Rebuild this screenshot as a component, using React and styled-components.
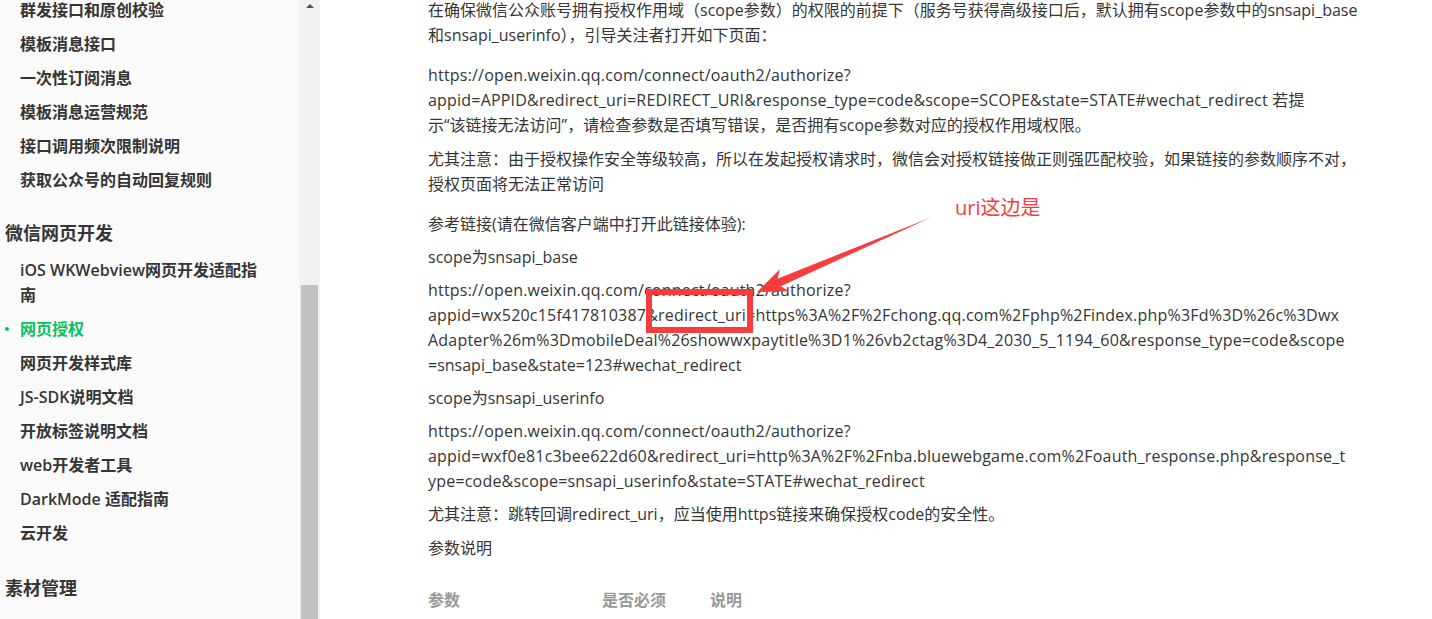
import React from "react";
import styled, { createGlobalStyle } from "styled-components";

const GlobalStyle = createGlobalStyle`
  html, body {
    margin: 0;
    padding: 0;
    background: #fff;
    overflow: hidden;
  }
  body {
    font-family: "Open Sans", "Noto Sans CJK SC", sans-serif;
    color: #353535;
  }
`;

const Page = styled.div`
  position: relative;
  display: flex;
  height: 619px;
  overflow: hidden;
`;

const Sidebar = styled.nav`
  width: 299px;
  flex-shrink: 0;
  background: #fafafa;
  overflow: hidden;
`;

const NavList = styled.ul`
  list-style: none;
  margin: -7px 0 0;
  padding: 0;
`;

const NavItem = styled.li`
  position: relative;
  padding: 4.5px 20px 4.5px 20px;
  font-size: 16px;
  line-height: 25px;
  font-weight: 600;
  color: ${(p) => (p.active ? "#07c160" : "#353535")};

  &::before {
    content: "";
    display: ${(p) => (p.active ? "block" : "none")};
    position: absolute;
    left: 5px;
    top: 15px;
    width: 4px;
    height: 4px;
    border-radius: 50%;
    background: #07c160;
  }
`;

const NavHeading = styled.li`
  margin-top: ${(p) => p.gap || 16}px;
  padding-left: 5px;
  font-size: 18px;
  line-height: 40px;
  font-weight: 600;
  color: #353535;
`;

const ScrollTrack = styled.div`
  width: 21px;
  flex-shrink: 0;
  background: #f1f1f1;
  display: flex;
  flex-direction: column;
  align-items: center;
  justify-content: space-between;
`;

const UpArrow = styled.span`
  margin-top: 4px;
  margin-left: 1px;
  width: 0;
  height: 0;
  border-left: 4px solid transparent;
  border-right: 4px solid transparent;
  border-bottom: 4px solid #505050;
`;

const Thumb = styled.div`
  width: 17px;
  height: 334px;
  background: #c1c1c1;
`;

const Main = styled.main`
  flex: 1;
  padding-left: 108px;
  margin-top: -2.5px;
`;

const Para = styled.p`
  margin: 0 0 ${(p) => (p.gap === undefined ? 8 : p.gap)}px;
  font-size: 16px;
  line-height: 25px;
  white-space: nowrap;
`;

// url-heavy lines are a touch wider in the original font
const Line = styled.span`
  letter-spacing: ${(p) => (p.latin ? "0.2px" : "0")};
`;

const ParamTable = styled.div`
  display: grid;
  grid-template-columns: 174px 108px 1fr;
  margin-top: 27px;
  font-size: 16px;
  line-height: 25px;
  font-weight: 700;
  color: #999;
`;

const MarkBox = styled.div`
  position: absolute;
  left: 646px;
  top: 289px;
  width: 95px;
  height: 32px;
  border: 6px solid #f63c3c;
`;

const MarkNote = styled.span`
  position: absolute;
  left: 955px;
  top: 195px;
  font-size: 20px;
  line-height: 26px;
  color: #f63c3c;
`;

const ArrowLayer = styled.svg`
  position: absolute;
  left: 0;
  top: 0;
  pointer-events: none;
`;

const sections = [
  {
    items: [
      "群发接口和原创校验",
      "模板消息接口",
      "一次性订阅消息",
      "模板消息运营规范",
      "接口调用频次限制说明",
      "获取公众号的自动回复规则",
    ],
  },
  {
    title: "微信网页开发",
    gap: 16,
    items: [
      "iOS WKWebview网页开发适配指南",
      "网页授权",
      "网页开发样式库",
      "JS-SDK说明文档",
      "开放标签说明文档",
      "web开发者工具",
      "DarkMode 适配指南",
      "云开发",
    ],
  },
  { title: "素材管理", gap: 18, items: [] },
];

const paragraphs = [
  {
    gap: 15,
    lines: [
      "在确保微信公众账号拥有授权作用域（scope参数）的权限的前提下（服务号获得高级接口后，默认拥有scope参数中的snsapi_base",
      "和snsapi_userinfo），引导关注者打开如下页面：",
    ],
  },
  {
    gap: 9,
    lines: [
      "https://open.weixin.qq.com/connect/oauth2/authorize?",
      "appid=APPID&redirect_uri=REDIRECT_URI&response_type=code&scope=SCOPE&state=STATE#wechat_redirect 若提",
      "示“该链接无法访问”，请检查参数是否填写错误，是否拥有scope参数对应的授权作用域权限。",
    ],
  },
  {
    gap: 15,
    lines: [
      "尤其注意：由于授权操作安全等级较高，所以在发起授权请求时，微信会对授权链接做正则强匹配校验，如果链接的参数顺序不对，",
      "授权页面将无法正常访问",
    ],
  },
  { lines: ["参考链接(请在微信客户端中打开此链接体验):"] },
  { lines: ["scope为snsapi_base"] },
  {
    lines: [
      "https://open.weixin.qq.com/connect/oauth2/authorize?",
      "appid=wx520c15f417810387&redirect_uri=https%3A%2F%2Fchong.qq.com%2Fphp%2Findex.php%3Fd%3D%26c%3Dwx",
      "Adapter%26m%3DmobileDeal%26showwxpaytitle%3D1%26vb2ctag%3D4_2030_5_1194_60&response_type=code&scope",
      "=snsapi_base&state=123#wechat_redirect",
    ],
  },
  { lines: ["scope为snsapi_userinfo"] },
  {
    lines: [
      "https://open.weixin.qq.com/connect/oauth2/authorize?",
      "appid=wxf0e81c3bee622d60&redirect_uri=http%3A%2F%2Fnba.bluewebgame.com%2Foauth_response.php&response_t",
      "ype=code&scope=snsapi_userinfo&state=STATE#wechat_redirect",
    ],
  },
  { gap: 9, lines: ["尤其注意：跳转回调redirect_uri，应当使用https链接来确保授权code的安全性。"] },
  { gap: 0, lines: ["参数说明"] },
];

const isLatin = (s) => (s.match(/[\u3000-\u9fff\uff00-\uffef]/g) || []).length < 4 && s.length > 40;

function App() {
  return (
    <Page>
      <GlobalStyle />
      <Sidebar>
        <NavList>
          {sections.map((section, i) => (
            <React.Fragment key={i}>
              {section.title && <NavHeading gap={section.gap}>{section.title}</NavHeading>}
              {section.items.map((item) => (
                <NavItem key={item} active={item === "网页授权"}>
                  {item === "iOS WKWebview网页开发适配指南" ? (
                    <>
                      iOS WKWebview网页开发适配指
                      <br />南
                    </>
                  ) : (
                    item
                  )}
                </NavItem>
              ))}
            </React.Fragment>
          ))}
        </NavList>
      </Sidebar>
      <ScrollTrack>
        <UpArrow />
        <Thumb />
      </ScrollTrack>
      <Main>
        {paragraphs.map((p, i) => (
          <Para key={i} gap={p.gap}>
            {p.lines.map((line, j) => (
              <React.Fragment key={j}>
                {j > 0 && <br />}
                <Line latin={isLatin(line)}>{line}</Line>
              </React.Fragment>
            ))}
          </Para>
        ))}
        <ParamTable>
          <span>参数</span>
          <span>是否必须</span>
          <span>说明</span>
        </ParamTable>
      </Main>

      <MarkBox />
      <MarkNote>uri这边是</MarkNote>
      <ArrowLayer width="1432" height="619" viewBox="0 0 1432 619">
        <polygon
          points="932,217 777.5,278.8 779.9,269.2 757,292 789.3,291.2 780.7,286.2"
          fill="#f63c3c"
        />
      </ArrowLayer>
    </Page>
  );
}

export default App;
